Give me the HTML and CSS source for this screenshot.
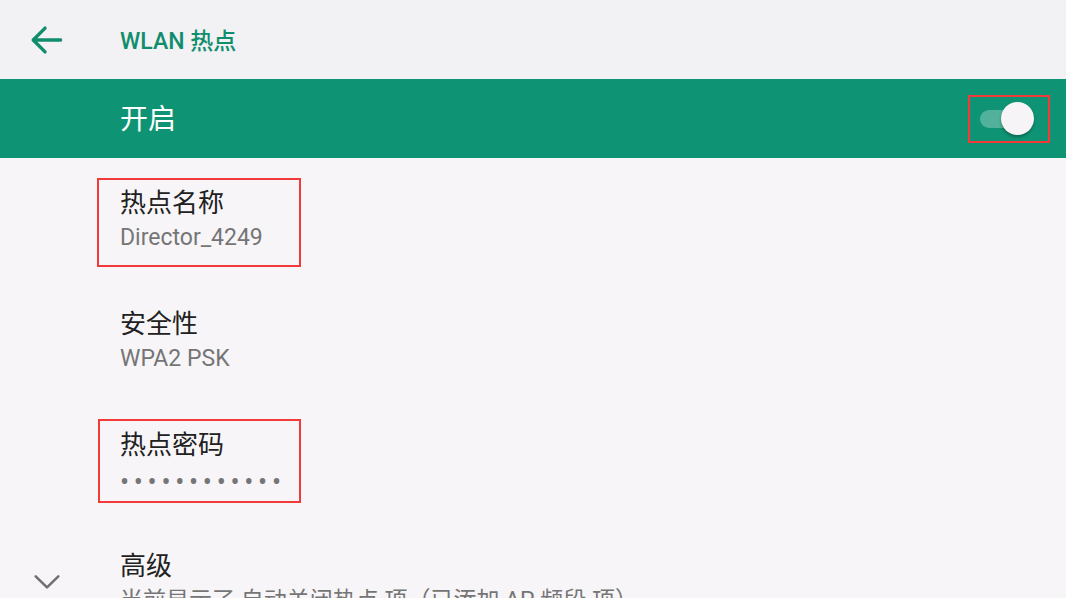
FILE: index.html
```html
<!DOCTYPE html>
<html lang="zh-CN">
<head>
<meta charset="utf-8">
<link rel="stylesheet" href="styles.css">
</head>
<body>
<div class="screen">
  <header class="appbar">
    <div class="nav-icon">
      <svg width="44" height="44" viewBox="0 0 24 24"><path d="M20 12H5.5M11.5 5.5L5 12l6.5 6.5" fill="none" stroke="#0f8d6c" stroke-width="1.8" stroke-linecap="round" stroke-linejoin="round"/></svg>
    </div>
    <div class="appbar-title">WLAN 热点</div>
  </header>
  <div class="switchbar">
    <div class="switch-label">开启</div>
    <div class="switch">
      <div class="track"></div>
      <div class="thumb"></div>
    </div>
    <div class="mark mark-switch"></div>
  </div>
  <main class="list">
    <div class="item">
      <div class="item-icon"></div>
      <div class="item-text">
        <div class="title">热点名称</div>
        <div class="summary">Director_4249</div>
      </div>
      <div class="mark mark-name"></div>
    </div>
    <div class="item">
      <div class="item-icon"></div>
      <div class="item-text">
        <div class="title">安全性</div>
        <div class="summary">WPA2 PSK</div>
      </div>
    </div>
    <div class="item">
      <div class="item-icon"></div>
      <div class="item-text">
        <div class="title">热点密码</div>
        <div class="summary dots">••••••••••••</div>
      </div>
      <div class="mark mark-pass"></div>
    </div>
    <div class="item">
      <div class="item-icon">
        <svg width="40" height="40" viewBox="0 0 24 24"><path d="M5.2 9.2l6.8 6.6 6.8-6.6" fill="none" stroke="#6f6f6f" stroke-width="1.5" stroke-linecap="round" stroke-linejoin="round"/></svg>
      </div>
      <div class="item-text">
        <div class="title">高级</div>
        <div class="summary">当前显示了 自动关闭热点 项（已添加 AP 频段 项）</div>
      </div>
    </div>
  </main>
</div>
</body>
</html>
```

FILE: styles.css
```css
* { box-sizing: border-box; }
html, body { margin: 0; padding: 0; }
body {
  width: 1066px;
  height: 598px;
  overflow: hidden;
  background: #f7f5f8;
  font-family: Roboto, "Noto Sans CJK SC", sans-serif;
}
.screen { display: flex; flex-direction: column; height: 598px; overflow: hidden; }
.appbar {
  height: 79px;
  background: #f2f1f4;
  display: flex;
  align-items: center;
  flex-shrink: 0;
}
.nav-icon {
  width: 120px;
  display: flex;
  padding-left: 24px;
}
.nav-icon svg { display: block; }
.appbar-title {
  font-size: 23px;
  font-weight: 500;
  color: #0f8d6c;
  padding-bottom: 1px;
}
.switchbar {
  position: relative;
  height: 79px;
  background: #0e9474;
  display: flex;
  align-items: center;
  justify-content: space-between;
  padding: 0 32px 0 120px;
  flex-shrink: 0;
}
.switch-label {
  color: #ffffff;
  font-size: 28px;
  line-height: 1;
  padding-top: 2px;
}
.switch {
  position: relative;
  width: 54px;
  height: 34px;
}
.track {
  position: absolute;
  left: 0;
  top: 8px;
  width: 52px;
  height: 18px;
  border-radius: 9px;
  background: rgba(255, 255, 255, 0.28);
}
.thumb {
  position: absolute;
  right: 0;
  top: 0;
  width: 33px;
  height: 33px;
  border-radius: 50%;
  background: #f6f4f7;
  box-shadow: 0 2px 3px rgba(0, 0, 0, 0.3);
}
.mark {
  position: absolute;
  border: 2px solid #f23a3a;
  pointer-events: none;
}
.mark-switch { left: 968px; top: 16px; width: 82px; height: 48px; }
.list { display: flex; flex-direction: column; }
.item {
  position: relative;
  height: 121px;
  flex-shrink: 0;
  display: flex;
  align-items: flex-start;
  padding-top: 26px;
}
.item-icon {
  width: 120px;
  flex-shrink: 0;
  display: flex;
  justify-content: flex-start;
  padding-left: 27px;
  padding-top: 14px;
}
.item-icon svg { display: block; }
.item-text { white-space: nowrap; }
.title {
  font-size: 26px;
  line-height: 38px;
  color: #212121;
}
.summary {
  font-size: 23px;
  line-height: 28px;
  color: #757575;
  margin-top: 2px;
}
.dots {
  font-size: 27px;
  letter-spacing: 4.7px;
  padding-top: 2px;
}
.mark-name { left: 97px; top: 20px; width: 204px; height: 89px; }
.mark-pass { left: 98px; top: 19px; width: 203px; height: 84px; }
```
